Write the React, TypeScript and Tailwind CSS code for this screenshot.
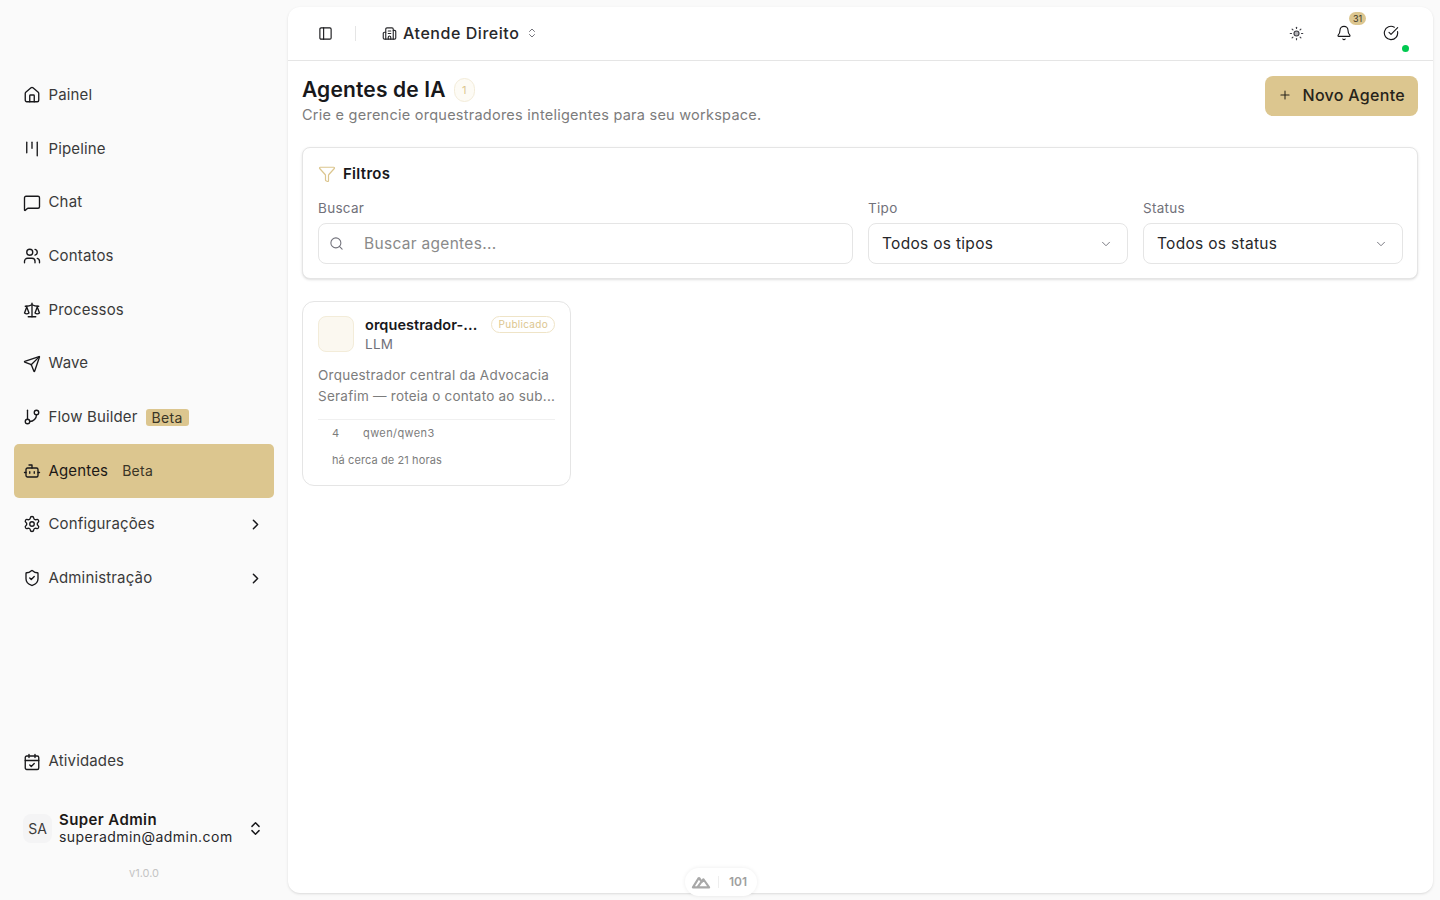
import { Bell, Bot, Building2, CalendarCheck, ChevronDown, ChevronRight, ChevronsUpDown, CircleCheckBig, Funnel, GitBranch, House, Kanban, MessageSquare, PanelLeft, Plus, Scale, Search, Send, Settings, ShieldCheck, Sun, Users } from "lucide-react";

const navItems = [
  { label: "Painel", icon: House },
  { label: "Pipeline", icon: Kanban },
  { label: "Chat", icon: MessageSquare },
  { label: "Contatos", icon: Users },
  { label: "Processos", icon: Scale },
  { label: "Wave", icon: Send },
  { label: "Flow Builder", icon: GitBranch, beta: true },
  { label: "Agentes", icon: Bot, beta: true, active: true },
  { label: "Configurações", icon: Settings, chevron: true },
  { label: "Administração", icon: ShieldCheck, chevron: true },
];

function Sidebar() {
  return (
    <aside className="flex h-full w-[288px] shrink-0 flex-col pl-[14px] pr-[14px] pt-[68.4px]">
      <nav className="flex flex-col">
        {navItems.map((item) => (
          <div
            key={item.label}
            className={`flex h-[53.67px] items-center rounded-[5px] pl-[9px] pr-[10px] text-[15px] tracking-[0.15px] ${item.active ? "bg-[#dcc68f] text-[#1c1917]" : "text-[#3a3a3a]"}`}
          >
            <item.icon size={18} strokeWidth={1.8} className="mr-[7.5px] shrink-0 text-[#18181b]" />
            <span>{item.label}</span>
            {item.beta && (
              <span className={`ml-[8px] rounded-[3px] px-[6px] text-[14px] leading-[17px] tracking-[0.3px] text-[#3a3526] ${item.active ? "" : "bg-[#dcc68f]"}`}>Beta</span>
            )}
            {item.chevron && <ChevronRight size={17} strokeWidth={2} className="ml-auto text-[#18181b]" />}
          </div>
        ))}
      </nav>
      <div className="mt-auto flex h-[54px] items-center pl-[9px] text-[15px] tracking-[0.15px] text-[#3a3a3a]">
        <CalendarCheck size={18} strokeWidth={1.8} className="mr-[7.5px] text-[#18181b]" />
        <span>Atividades</span>
      </div>
      <div className="mt-[13px] flex h-[54px] items-center pl-[9px] pr-[10px]">
        <div className="flex h-[29px] w-[29px] items-center justify-center rounded-lg bg-[#f4f4f5] text-[14px] text-[#3a3a3a]">SA</div>
        <div className="mb-[2px] ml-[7px] flex flex-col leading-[17px]">
          <span className="text-[15px] font-semibold tracking-[0.4px] text-[#1c1917]">Super Admin</span>
          <span className="text-[14px] tracking-[0.45px] text-[#27272a]">superadmin@admin.com</span>
        </div>
        <ChevronsUpDown size={17} strokeWidth={2} className="ml-auto text-[#18181b]" />
      </div>
      <div className="mb-[19px] mt-[9px] text-center text-[11px] text-[#c4c4c4]">v1.0.0</div>
    </aside>
  );
}

function Header() {
  return (
    <header className="flex h-[54px] shrink-0 items-center border-b border-[#e5e5e5] pb-px pl-[30px] pr-[34px]">
      <PanelLeft size={15} strokeWidth={1.8} className="text-[#18181b]" />
      <div className="ml-[22px] h-[15px] w-px bg-[#e5e5e5]" />
      <Building2 size={15} strokeWidth={1.8} className="ml-[26px] text-[#27272a]" />
      <span className="ml-[6px] text-[16px] font-medium tracking-[0.55px] text-[#27272a]">Atende Direito</span>
      <ChevronsUpDown size={12} strokeWidth={1.6} className="ml-[7px] text-[#52525b]" />
      <div className="ml-auto flex items-center">
        <Sun size={15} strokeWidth={1.8} fill="#b4b4b8" className="text-[#3f3f46]" />
        <div className="relative ml-[32px]">
          <Bell size={16} strokeWidth={1.7} className="text-[#18181b]" />
          <span className="absolute -top-[13px] left-[13px] flex h-[13px] w-[17px] items-center justify-center rounded-full bg-[#dcc68f] text-[9px] text-[#3a3526]">31</span>
        </div>
        <div className="relative ml-[31px]">
          <CircleCheckBig size={16} strokeWidth={1.7} className="text-[#18181b]" />
          <span className="absolute -bottom-[11px] left-[19px] h-[7px] w-[7px] rounded-full bg-[#00c950]" />
        </div>
      </div>
    </header>
  );
}

function Field({ label, className, children }: { label: string; className: string; children: React.ReactNode }) {
  return (
    <div className={className}>
      <div className="mb-[6px] text-[13.5px] leading-[18px] tracking-[0.3px] text-[#71717a]">{label}</div>
      <div className="flex h-[41px] items-center rounded-lg border border-[#e5e5e5] bg-white text-[15.5px] tracking-[0.3px]">{children}</div>
    </div>
  );
}

function Filters() {
  return (
    <section className="mt-[22px] rounded-lg border border-[#e5e5e5] bg-white pb-[14px] pl-[15px] pr-[14px] pt-[15px] shadow-sm">
      <div className="flex items-center">
        <Funnel size={18} strokeWidth={1.6} className="text-[#dcc68f]" />
        <span className="ml-[7px] mt-px text-[15px] font-semibold leading-[20px] tracking-[0.3px] text-[#18181b]">Filtros</span>
      </div>
      <div className="mt-[15px] flex gap-[15px]">
        <Field label="Buscar" className="flex-1">
          <Search size={15} strokeWidth={1.7} className="ml-[10px] text-[#71717a]" />
          <span className="ml-[20px] text-[#8a8a8a]">Buscar agentes...</span>
        </Field>
        <Field label="Tipo" className="w-[260px]">
          <span className="ml-[13px] text-[#27272a]">Todos os tipos</span>
          <ChevronDown size={14} strokeWidth={1.6} className="ml-auto mr-[14px] text-[#71717a]" />
        </Field>
        <Field label="Status" className="w-[260px]">
          <span className="ml-[13px] text-[#27272a]">Todos os status</span>
          <ChevronDown size={14} strokeWidth={1.6} className="ml-auto mr-[14px] text-[#71717a]" />
        </Field>
      </div>
    </section>
  );
}

function AgentCard() {
  return (
    <article className="mt-[22px] w-[269px] rounded-xl border border-[#e5e5e5] bg-white px-[15px] pb-[17px] pt-[14px]">
      <div className="flex items-start">
        <div className="h-[36px] w-[36px] rounded-lg border border-[#f3ecd9] bg-[#fbf8f0]" />
        <div className="ml-[11px] flex min-w-0 flex-1 flex-col">
          <div className="flex items-center justify-between">
            <span className="text-[14.5px] font-semibold leading-[18px] tracking-[0.05px] text-[#18181b]">orquestrador-...</span>
            <span className="-mt-px rounded-full border border-[#efe4c7] px-[6px] text-[10px] leading-[15px] tracking-[0.3px] text-[#dcc68f]">Publicado</span>
          </div>
          <span className="mt-[1px] text-[13.5px] leading-[18px] tracking-[0.3px] text-[#71717a]">LLM</span>
        </div>
      </div>
      <p className="mt-[12px] whitespace-nowrap text-[13.5px] leading-[21px] tracking-[0.24px] text-[#7c7c7c]">
        Orquestrador central da Advocacia
        <br />
        Serafim — roteia o contato ao sub...
      </p>
      <div className="mt-[12px] border-t border-[#f0f0f0] pl-[14px] pt-[6px] text-[11px] leading-[15px] text-[#7c7c7c]">
        <div className="flex tracking-[0.4px]">
          <span className="w-[31px]">4</span>
          <span>qwen/qwen3</span>
        </div>
        <div className="mt-[12px] tracking-[0.1px]">há cerca de 21 horas</div>
      </div>
    </article>
  );
}

function NuxtBadge() {
  return (
    <div className="absolute bottom-[4px] left-[685px] flex h-[28px] w-[72px] items-center overflow-hidden rounded-full bg-white pl-[6px] shadow-[0_0_4px_rgba(0,0,0,0.08)]">
      <svg width="20" height="13" viewBox="0 0 24 16" fill="none" stroke="#a8a8a8" strokeWidth="2.6" strokeLinejoin="round">
        <path d="M9.5 2 2 14h5.5M9.5 2l4 6.5M7.5 14l7.5-10 7 10H7.5Z" />
      </svg>
      <div className="ml-[7px] h-[12px] w-px bg-[#eeeeee]" />
      <span className="ml-[10px] text-[12px] font-semibold text-[#a0a0a0]">101</span>
    </div>
  );
}

export default function App() {
  return (
    <div className="relative flex h-[900px] w-[1440px] overflow-hidden bg-[#fafafa] font-['Inter',sans-serif]">
      <Sidebar />
      <main className="mb-[7px] mr-[7px] mt-[7px] flex flex-1 flex-col rounded-xl bg-white shadow-sm">
        <Header />
        <div className="pl-[14px] pr-[15px] pt-[15px]">
          <div className="flex items-start justify-between">
            <div>
              <div className="flex items-center">
                <h1 className="text-[21px] font-semibold leading-[28px] tracking-[0.15px] text-[#18181b]">Agentes de IA</h1>
                <span className="ml-[8px] flex h-[24px] w-[21px] items-center justify-center rounded-full border border-[#f3ecd9] bg-[#fdfbf5] text-[11px] text-[#dcc68f]">1</span>
              </div>
              <p className="mt-[1px] text-[14.5px] leading-[20px] tracking-[0.25px] text-[#7c7c7c]">Crie e gerencie orquestradores inteligentes para seu workspace.</p>
            </div>
            <button className="flex h-[40px] items-center rounded-lg bg-[#dcc68f] pb-[2px] pl-[13px] pr-[13px] text-[16px] font-medium tracking-[0.3px] text-[#27231a]">
              <Plus size={14} strokeWidth={1.8} className="mr-[11px]" />
              Novo Agente
            </button>
          </div>
          <Filters />
          <AgentCard />
        </div>
      </main>
      <NuxtBadge />
    </div>
  );
}
